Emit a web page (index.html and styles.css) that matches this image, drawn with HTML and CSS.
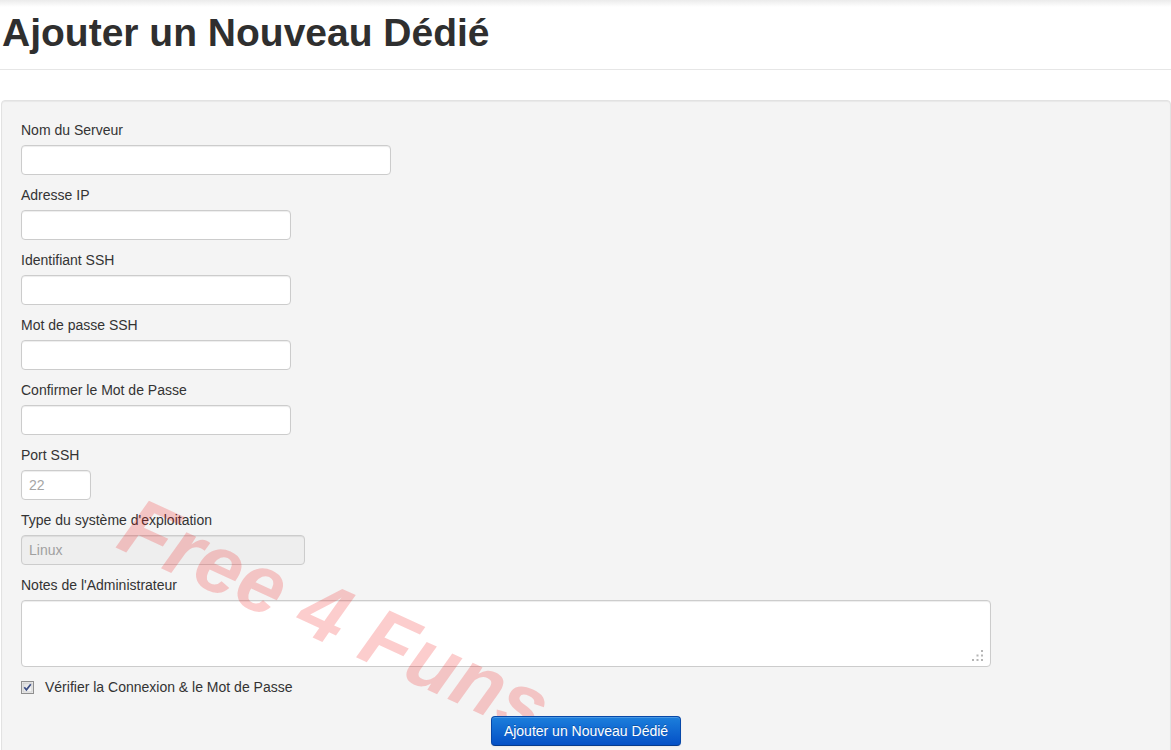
FILE: index.html
```html
<!DOCTYPE html>
<html lang="fr">
<head>
<meta charset="utf-8">
<title>Ajouter un Nouveau Dédié</title>
<link rel="stylesheet" href="styles.css">
</head>
<body>
<div class="page">
  <h1 class="page-title">Ajouter un Nouveau Dédié</h1>
  <form class="well">
    <div class="field">
      <label class="field-label">Nom du Serveur</label>
      <input class="text-input w-370" type="text">
    </div>
    <div class="field">
      <label class="field-label">Adresse IP</label>
      <input class="text-input w-270" type="text">
    </div>
    <div class="field">
      <label class="field-label">Identifiant SSH</label>
      <input class="text-input w-270" type="text">
    </div>
    <div class="field">
      <label class="field-label">Mot de passe SSH</label>
      <input class="text-input w-270" type="password">
    </div>
    <div class="field">
      <label class="field-label">Confirmer le Mot de Passe</label>
      <input class="text-input w-270" type="password">
    </div>
    <div class="field">
      <label class="field-label">Port SSH</label>
      <input class="text-input w-70" type="text" placeholder="22">
    </div>
    <div class="field">
      <label class="field-label">Type du système d'exploitation</label>
      <input class="text-input w-284 is-disabled" type="text" value="Linux" disabled>
    </div>
    <div class="field">
      <label class="field-label">Notes de l'Administrateur</label>
      <div class="textarea-wrap">
        <textarea class="text-area"></textarea>
        <svg class="grip" width="12" height="12" viewBox="0 0 12 12" aria-hidden="true">
          <rect x="9" y="0" width="2" height="2" fill="#b5b5b5"/>
          <rect x="4.5" y="4.5" width="2" height="2" fill="#b5b5b5"/>
          <rect x="9" y="4.5" width="2" height="2" fill="#b5b5b5"/>
          <rect x="0" y="9" width="2" height="2" fill="#b5b5b5"/>
          <rect x="4.5" y="9" width="2" height="2" fill="#b5b5b5"/>
          <rect x="9" y="9" width="2" height="2" fill="#b5b5b5"/>
        </svg>
      </div>
    </div>
    <label class="check">
      <svg class="check-box" width="13" height="13" viewBox="0 0 13 13" aria-hidden="true">
        <defs>
          <linearGradient id="cbg" x1="0" y1="0" x2="1" y2="1">
            <stop offset="0" stop-color="#dcdcdc"/>
            <stop offset="1" stop-color="#fbfbfb"/>
          </linearGradient>
        </defs>
        <rect x="0.5" y="0.5" width="12" height="12" fill="#f4f4f4" stroke="#8f8f8f"/>
        <rect x="2" y="2" width="9" height="9" fill="url(#cbg)" stroke="#c6c6c6" stroke-width="0.8"/>
        <path d="M3.3 6.3 L5.4 8.8 L9.8 3.2" fill="none" stroke="#3b4d84" stroke-width="1.7"/>
      </svg>
      <span>Vérifier la Connexion &amp; le Mot de Passe</span>
    </label>
    <div class="actions">
      <button class="btn-primary" type="button">Ajouter un Nouveau Dédié</button>
    </div>
  </form>
  <div class="watermark">Free 4 Funs</div>
</div>
</body>
</html>
```
FILE: styles.css
```css
html, body {
  margin: 0;
  padding: 0;
}

body {
  font-family: "Liberation Sans", Arial, sans-serif;
  font-size: 14px;
  color: #333;
  background: #fff linear-gradient(#ebebeb, #fff 7px) no-repeat;
}

.page {
  position: relative;
  overflow: hidden;
  min-height: 750px;
}

.page-title {
  margin: 0;
  padding: 13px 0 16px 2px;
  font-size: 39px;
  line-height: 40px;
  font-weight: bold;
  color: #2f2f2f;
  border-bottom: 1px solid #e6e6e6;
}

.well {
  margin: 30px 0 0 1px;
  padding: 19px;
  background: #f4f4f4;
  border: 1px solid #e2e2e2;
  border-radius: 4px;
  box-shadow: inset 0 1px 1px rgba(0, 0, 0, 0.05);
}

.field {
  display: flex;
  flex-direction: column;
  align-items: flex-start;
  gap: 5px;
  margin-bottom: 10px;
}

.field-label {
  display: block;
  line-height: 20px;
  color: #333;
}

.text-input,
.text-area {
  box-sizing: border-box;
  margin: 0;
  font-family: "Liberation Sans", Arial, sans-serif;
  font-size: 14px;
  color: #555;
  background: #fff;
  border: 1px solid #ccc;
  border-radius: 4px;
  box-shadow: inset 0 1px 1px rgba(0, 0, 0, 0.075);
  outline: none;
}

.text-input {
  height: 30px;
  padding: 4px 7px;
  line-height: 20px;
}

.text-input::placeholder {
  color: #a5a5a5;
}

.w-370 { width: 370px; }
.w-270 { width: 270px; }
.w-70  { width: 70px; }
.w-284 { width: 284px; }

.is-disabled {
  background: #eee;
  color: #a0a0a0;
  -webkit-text-fill-color: #a0a0a0;
}

.textarea-wrap {
  position: relative;
  width: 970px;
  height: 67px;
}

.text-area {
  display: block;
  width: 970px;
  height: 67px;
  padding: 4px 7px;
  resize: none;
}

.grip {
  position: absolute;
  right: 7px;
  bottom: 5px;
}

.check {
  display: flex;
  align-items: center;
  gap: 11px;
  height: 20px;
  line-height: 20px;
  color: #333;
}

.check-box {
  display: block;
  flex: none;
}

.actions {
  display: flex;
  justify-content: center;
  margin-top: 19px;
}

.btn-primary {
  position: relative;
  z-index: 2;
  box-sizing: border-box;
  height: 30px;
  padding: 4px 12px;
  font-family: "Liberation Sans", Arial, sans-serif;
  font-size: 14px;
  line-height: 20px;
  color: #fff;
  text-shadow: 0 -1px 0 rgba(0, 0, 0, 0.25);
  background: linear-gradient(#1c7fdc, #0450c6);
  border: 1px solid #0748a8;
  border-bottom-color: #043a8c;
  border-radius: 4px;
  box-shadow: inset 0 1px 0 rgba(255, 255, 255, 0.2), 0 1px 2px rgba(0, 0, 0, 0.05);
  cursor: pointer;
}

.watermark {
  position: absolute;
  z-index: 1;
  left: 114px;
  top: 478px;
  font-family: "Liberation Sans", Arial, sans-serif;
  font-size: 82px;
  line-height: 82px;
  font-weight: bold;
  font-style: italic;
  white-space: nowrap;
  color: rgba(240, 20, 20, 0.21);
  transform-origin: 0 69.5px;
  transform: rotate(24.5deg);
  pointer-events: none;
}
```
